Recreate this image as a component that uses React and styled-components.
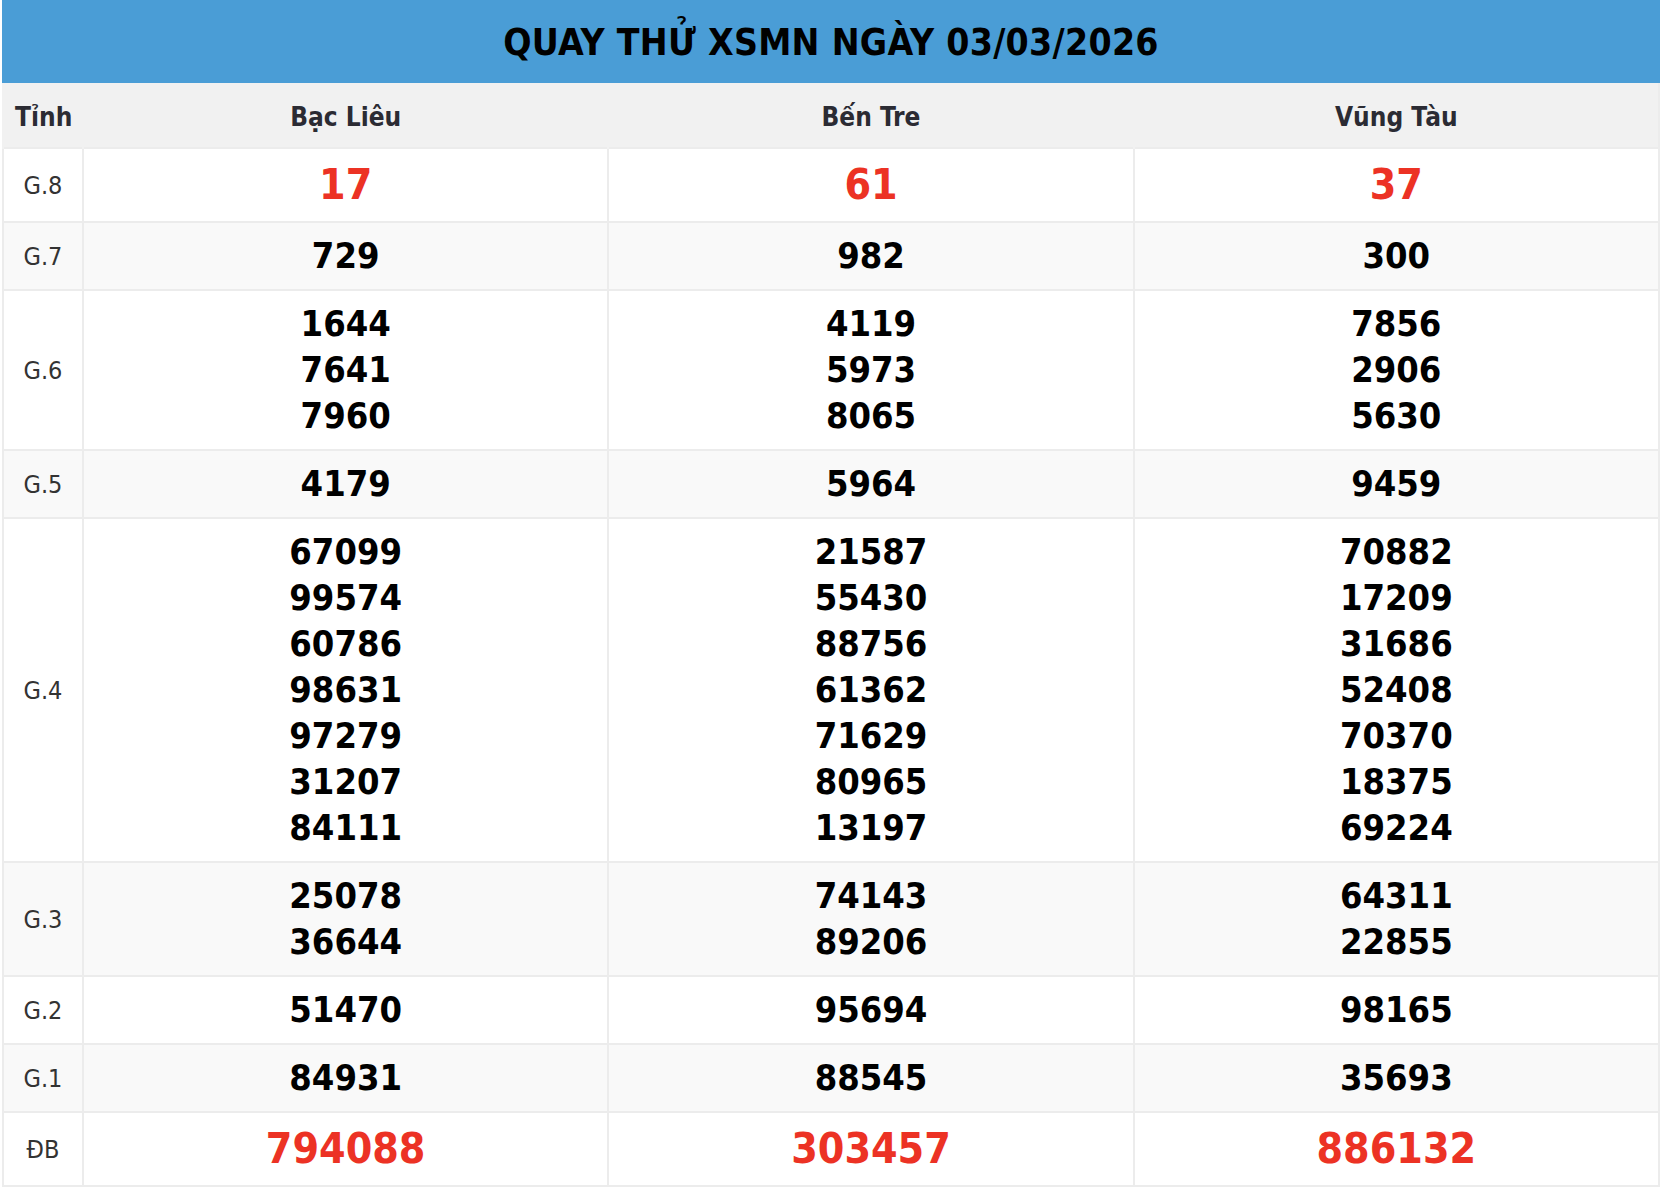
import styled, { createGlobalStyle } from "styled-components";

const GlobalStyle = createGlobalStyle`
    html, body {
        margin: 0;
        padding: 0;
        background: #ffffff;
    }
    body {
        font-family: "DejaVu Sans", Verdana, sans-serif;
        font-stretch: condensed;
    }
`;

const provinces = ["Bạc Liêu", "Bến Tre", "Vũng Tàu"];

const prizes = [
    { label: "G.8", red: true, values: [["17"], ["61"], ["37"]] },
    { label: "G.7", values: [["729"], ["982"], ["300"]] },
    {
        label: "G.6",
        values: [
            ["1644", "7641", "7960"],
            ["4119", "5973", "8065"],
            ["7856", "2906", "5630"],
        ],
    },
    { label: "G.5", values: [["4179"], ["5964"], ["9459"]] },
    {
        label: "G.4",
        values: [
            ["67099", "99574", "60786", "98631", "97279", "31207", "84111"],
            ["21587", "55430", "88756", "61362", "71629", "80965", "13197"],
            ["70882", "17209", "31686", "52408", "70370", "18375", "69224"],
        ],
    },
    {
        label: "G.3",
        values: [
            ["25078", "36644"],
            ["74143", "89206"],
            ["64311", "22855"],
        ],
    },
    { label: "G.2", values: [["51470"], ["95694"], ["98165"]] },
    { label: "G.1", values: [["84931"], ["88545"], ["35693"]] },
    { label: "ĐB", red: true, values: [["794088"], ["303457"], ["886132"]] },
];

const App = () => {
    return (
        <>
            <GlobalStyle />
            <Wrapper>
                <TitleBar>QUAY THỬ XSMN NGÀY 03/03/2026</TitleBar>
                <ResultTable>
                    <colgroup>
                        <col style={{ width: 80 }} />
                        <col />
                        <col />
                        <col />
                    </colgroup>
                    <thead>
                        <tr>
                            <HeadCell $left>Tỉnh</HeadCell>
                            {provinces.map((name) => (
                                <HeadCell key={name}>{name}</HeadCell>
                            ))}
                        </tr>
                    </thead>
                    <tbody>
                        {prizes.map(({ label, red, values }, index) => (
                            <Row key={label} $striped={index % 2 === 1}>
                                <LabelCell>{label}</LabelCell>
                                {values.map((list, col) => (
                                    <NumberCell key={col}>
                                        {list.map((num) => (
                                            <Number key={num} $red={red}>
                                                {num}
                                            </Number>
                                        ))}
                                    </NumberCell>
                                ))}
                            </Row>
                        ))}
                    </tbody>
                </ResultTable>
            </Wrapper>
        </>
    );
};

export default App;

const Wrapper = styled.div`
    width: 1662px;
    box-sizing: border-box;
    padding: 0 2px;
`;

const TitleBar = styled.div`
    height: 83px;
    display: flex;
    align-items: center;
    justify-content: center;
    padding-top: 2px;
    box-sizing: border-box;
    background-color: #4a9dd6;
    color: #000000;
    font-size: 37px;
    font-weight: bold;
    letter-spacing: 0.3px;
`;

const ResultTable = styled.table`
    width: 100%;
    border-collapse: collapse;
    table-layout: fixed;
    border: 2px solid #ececec;
    border-top: none;
`;

const HeadCell = styled.th`
    height: 61px;
    padding: 3px ${({ $left }) => ($left ? "11px" : "0")} 0;
    background-color: #f1f1f1;
    color: #2b2b33;
    font-size: 26px;
    font-weight: bold;
    text-align: ${({ $left }) => ($left ? "left" : "center")};
    border-left: 2px solid #f1f1f1;
`;

const Row = styled.tr`
    background-color: ${({ $striped }) => ($striped ? "#f9f9f9" : "#ffffff")};
`;

const LabelCell = styled.td`
    border: 2px solid #ececec;
    color: #333333;
    font-size: 25px;
    text-align: center;
    vertical-align: middle;
`;

const NumberCell = styled.td`
    border: 2px solid #ececec;
    padding: 10px 0;
    text-align: center;
    vertical-align: middle;
`;

const Number = styled.div`
    color: ${({ $red }) => ($red ? "#ec3224" : "#000000")};
    font-size: ${({ $red }) => ($red ? "42.5px" : "36px")};
    line-height: ${({ $red }) => ($red ? "52px" : "46px")};
    font-weight: bold;
`;
